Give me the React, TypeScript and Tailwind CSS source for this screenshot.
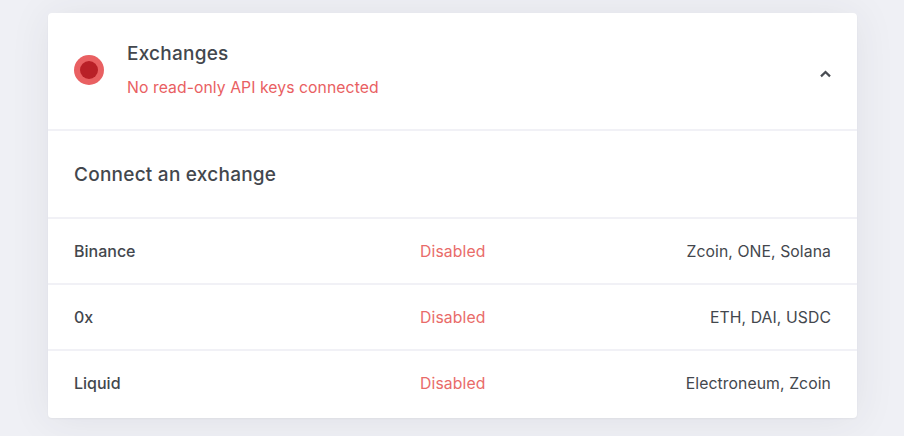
const rows = [
  { name: 'Binance', coins: 'Zcoin, ONE, Solana' },
  { name: '0x', coins: 'ETH, DAI, USDC' },
  { name: 'Liquid', coins: 'Electroneum, Zcoin' },
];

export default function App() {
  return (
    <div className="h-[436px] overflow-hidden bg-[#eff0f5] pt-[12.5px] pl-[47.5px] font-['Inter',sans-serif] text-[#43474d]">
      <section className="h-[405.5px] w-[809.5px] rounded-[4px] bg-white shadow-[0_1px_2px_rgba(50,50,70,0.05),0_2px_40px_rgba(50,50,60,0.08)]">
        <header className="flex h-[118.5px] items-start border-b-2 border-[#f1f1f6] px-[26px]">
          <svg className="mt-[42px] size-[31px] shrink-0" viewBox="0 0 31 31">
            <circle cx="15" cy="15" r="15" fill="#e96062" />
            <circle cx="15" cy="15" r="9" fill="#b92027" />
          </svg>
          <div className="mt-[27.5px] ml-[22.5px] flex-1">
            <h1 className="text-[19px] leading-7 font-medium tracking-[0.24px]">Exchanges</h1>
            <p className="mt-[8px] text-[15.75px] leading-6 tracking-[0.06px] text-[#e96062]">No read-only API keys connected</p>
          </div>
          <svg className="mt-[57.5px] h-[8px] w-[11px]" viewBox="0 0 11 8" fill="none" stroke="#484c52" strokeWidth="2.2">
            <path d="M1 6.4 5.5 2l4.5 4.4" />
          </svg>
        </header>
        <div className="flex h-[88px] items-center border-b-2 border-[#f1f1f6] px-[26.5px] pt-[2px]">
          <h2 className="text-[19px] leading-7 font-medium tracking-[0.24px]">Connect an exchange</h2>
        </div>
        {rows.map((row) => (
          <div key={row.name} className="flex h-[66px] items-center border-b-2 border-[#f1f1f6] pt-px pr-[26px] pl-[26.5px] text-[15.75px] leading-6 last:border-transparent">
            <span className="mb-[2px] w-[346px] text-[16px] font-medium">{row.name}</span>
            <span className="flex-1 tracking-[0.12px] text-[#e96b69]">Disabled</span>
            <span className="tracking-[0.08px]">{row.coins}</span>
          </div>
        ))}
      </section>
    </div>
  );
}
